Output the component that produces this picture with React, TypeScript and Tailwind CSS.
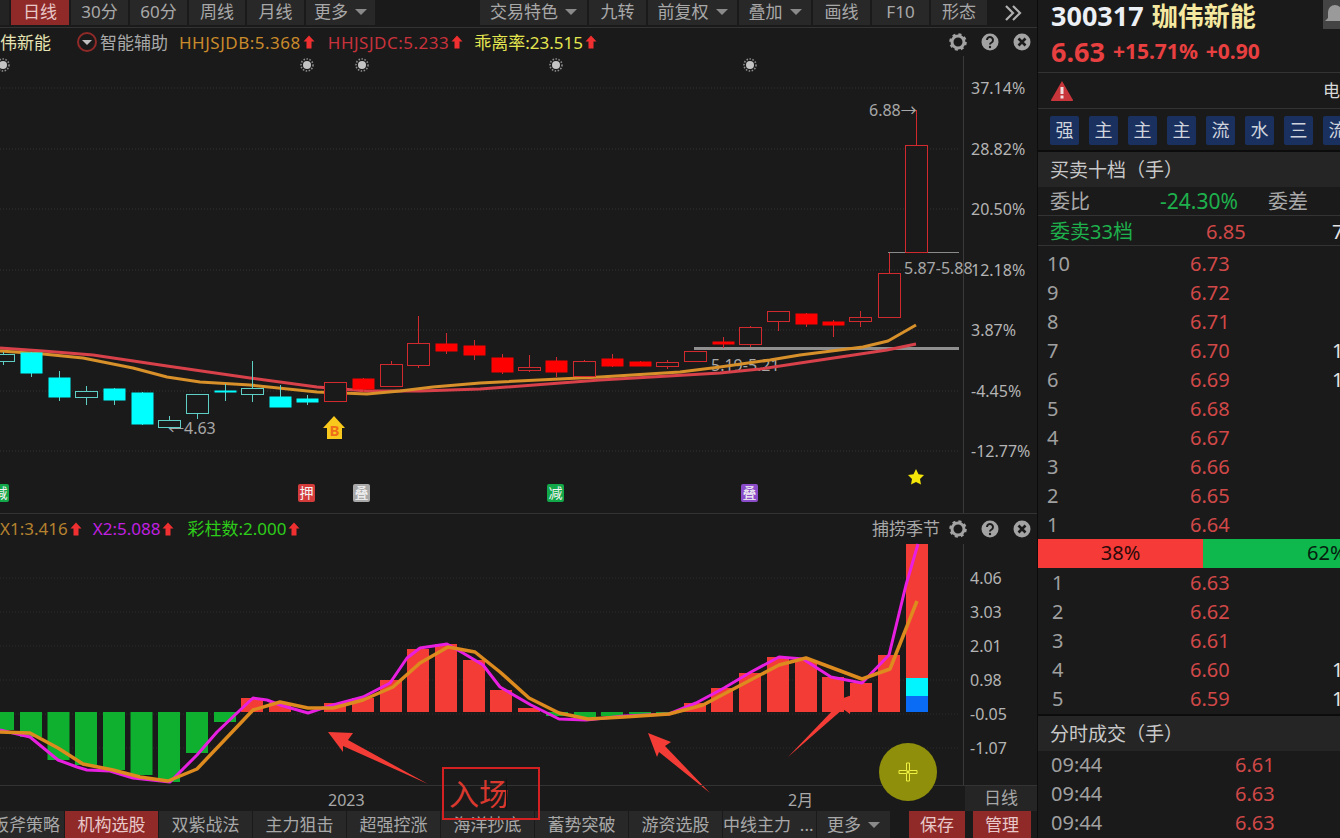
const topLeft = [
  { label: "日线", w: "w-[58px]", active: true },
  { label: "30分", w: "w-[57px]" },
  { label: "60分", w: "w-[57px]" },
  { label: "周线", w: "w-[56px]" },
  { label: "月线", w: "w-[57px]" },
  { label: "更多", w: "w-[69px]", caret: true },
];
const topRight = [
  { label: "交易特色", w: "w-[107px]", caret: true },
  { label: "九转", w: "w-[57px]" },
  { label: "前复权", w: "w-[89px]", caret: true },
  { label: "叠加", w: "w-[72px]", caret: true },
  { label: "画线", w: "w-[57px]" },
  { label: "F10", w: "w-[57px]" },
  { label: "形态", w: "w-[56px]" },
];
const bottomTabs = [
  { label: "机构选股", active: true },
  { label: "双紫战法" },
  { label: "主力狙击" },
  { label: "超强控涨" },
  { label: "海洋抄底" },
  { label: "蓄势突破" },
  { label: "游资选股" },
];

// [x, top, bottom, wickTop, wickBottom, filled]
const candles: [number, number, number, number, number, boolean][] = [
  [3, 354, 361, 352, 365, false],
  [31, 352, 373, 352, 377, true],
  [58.5, 377, 397, 371, 401, true],
  [86, 391, 397, 386, 405, false],
  [114, 388, 400, 388, 405, true],
  [141.5, 392, 424, 392, 425, true],
  [169, 420, 427, 416, 428, false],
  [197, 394, 413, 394, 419, false],
  [224.5, 390, 392, 384, 401, true],
  [252, 388, 394, 361, 402, false],
  [280, 396, 407, 385, 407, true],
  [307, 398, 402, 395, 405, true],
  [335, 382, 401, 382, 401, false],
  [363, 378, 389, 378, 392, true],
  [391, 364, 386, 361, 386, false],
  [418, 343, 365, 316, 368, false],
  [446, 343, 351, 333, 354, true],
  [474, 345, 355, 340, 360, true],
  [501.5, 357, 372, 354, 374, true],
  [529, 367, 370, 355, 372, false],
  [556, 360, 372, 357, 377, true],
  [584, 361, 376, 360, 376, false],
  [612, 358, 366, 354, 367, true],
  [640, 361, 366, 361, 366, true],
  [667, 362, 366, 360, 369, false],
  [695, 351, 361, 351, 361, false],
  [723, 341, 344, 337, 348, true],
  [750, 327, 344, 326, 347, false],
  [778, 311, 321, 311, 331, false],
  [806, 313, 324, 313, 327, true],
  [833, 321, 325, 320, 337, true],
  [860, 317, 321, 311, 327, false],
  [889, 273, 317, 253, 317, false],
  [916, 145, 252, 110, 252, false],
];

const maRed = "0,348 43,351 93,355 167,366 250,378 317,387 367,391 420,391 480,389 600,380 720,373 760,369 800,363 847,356 887,350 916,344";
const maOrange = "0,351 43,354 83,358 133,368 167,377 200,382 250,385 317,392 367,394 400,391 433,387 480,383 600,377 680,372 720,367 770,360 800,355 863,347 888,341 916,325";
const x2Line = "0,730 30,737 58,760 77,767 87,770 110,771 133,778 170,782 197,755 217,732 237,713 253,698 267,700 280,705 308,713 323,708 333,705 363,697 390,683 407,658 420,648 447,644 463,653 483,665 500,687 531,705 559,719 586,720 624,716 669,714 696,703 724,688 751,672 779,657 803,659 831,677 862,683 889,655 906,585 918,544";
const x1Line = "0,732 30,733 58,748 83,764 113,770 140,777 168,781 197,769 253,710 280,702 308,708 333,708 363,700 393,687 420,663 448,647 475,652 500,672 529,698 559,713 588,719 624,717 669,714 703,705 741,685 779,665 806,658 862,679 890,669 917,601";

// [x, y end of bar, positive]
const bars: [number, number, boolean][] = [
  [3, 730, false], [31, 737, false], [58.5, 760, false], [86, 765, false], [114, 770, false],
  [141.5, 775, false], [169, 782, false], [197, 753, false], [225, 722, false], [252, 698, true],
  [280, 703, true], [335, 703, true], [363, 698, true], [391, 680, true], [418, 649, true],
  [446, 644, true], [474, 660, true], [501, 690, true], [529, 708, true], [557, 716, false],
  [585, 718, false], [612, 716, false], [640, 714, false], [667, 713, false], [695, 703, true],
  [722, 688, true], [750, 673, true], [778, 657, true], [806, 660, true], [833, 677, true],
  [861, 683, true], [889, 655, true],
];

const mainGrid = [88, 149, 209, 270, 330, 391, 451];
const mainAxis = ["37.14%", "28.82%", "20.50%", "12.18%", "3.87%", "-4.45%", "-12.77%"];
const subGrid = [578, 612, 646, 680, 714, 748];
const subAxis = ["4.06", "3.03", "2.01", "0.98", "-0.05", "-1.07"];

const asks = [
  ["10", "6.73", ""], ["9", "6.72", ""], ["8", "6.71", ""], ["7", "6.70", "1"], ["6", "6.69", "1"],
  ["5", "6.68", ""], ["4", "6.67", ""], ["3", "6.66", ""], ["2", "6.65", ""], ["1", "6.64", ""],
];
const bids = [
  ["1", "6.63", ""], ["2", "6.62", ""], ["3", "6.61", ""], ["4", "6.60", "1"], ["5", "6.59", "1"],
];
const tags = ["强", "主", "主", "主", "流", "水", "三", "流"];

const Caret = () => (
  <span className="ml-[7px] inline-block h-0 w-0 border-x-[6px] border-t-[6px] border-x-transparent border-t-[#8a8a8a]" />
);

const UpArrow = () => (
  <svg width="12" height="14" viewBox="0 0 12 14" className="mx-[2px] shrink-0">
    <path d="M6 0.5 L11.5 6.5 H8.5 V13.5 H3.5 V6.5 H0.5 Z" fill="#f03030" />
  </svg>
);

const PanelIcons = () => (
  <div className="flex items-center gap-[14px]">
    <svg width="18" height="18" viewBox="0 0 18 18">
      <circle cx="9" cy="9" r="6" fill="none" stroke="#a3a3a3" strokeWidth="3" />
      <circle cx="9" cy="9" r="7.6" fill="none" stroke="#a3a3a3" strokeWidth="2.4" strokeDasharray="3 3" />
    </svg>
    <svg width="18" height="18" viewBox="0 0 18 18">
      <circle cx="9" cy="9" r="8.5" fill="#a3a3a3" />
      <path d="M6 7a3 3 0 1 1 4.6 2.5C9.6 10.100 9 10.500 9 11.500" fill="none" stroke="#1a1a1a" strokeWidth="2" />
      <circle cx="9" cy="14" r="1.2" fill="#1a1a1a" />
    </svg>
    <svg width="18" height="18" viewBox="0 0 18 18">
      <circle cx="9" cy="9" r="8.5" fill="#a3a3a3" />
      <path d="M5.500 5.500 L12.500 12.500 M12.500 5.500 L5.500 12.500" stroke="#1a1a1a" strokeWidth="2.600" />
    </svg>
  </div>
);

const Sun = ({ x }: { x: number }) => (
  <g>
    <circle cx={x} cy={65} r={6} fill="none" stroke="#8c8c8c" strokeWidth="1.600" strokeDasharray="1.500 1.500" />
    <circle cx={x} cy={65} r={4} fill="#c4c4c4" />
  </g>
);

const Tag = ({ x, label, color }: { x: number; label: string; color: string }) => (
  <g>
    <rect x={x - 8} y={484} width={17} height={18} rx={2} fill={color} />
    <text x={x + 0.5} y={498} fontSize="14" fill="#f4f4f4" textAnchor="middle">{label}</text>
  </g>
);

const MainChart = () => (
  <svg width="1037" height="457" viewBox="0 56 1037 457" className="block">
    {mainGrid.map((y, i) => (
      <g key={y}>
        <line x1="0" x2="959" y1={y} y2={y} stroke="#333" strokeDasharray="1 2" />
        <text x="971" y={y + 6} fontSize="16" fill="#b4b4b4">{mainAxis[i]}</text>
      </g>
    ))}
    <line x1="963.500" x2="963.500" y1="56" y2="513" stroke="#3a3a3a" />
    {[3, 307, 362, 556, 750].map((x) => <Sun key={x} x={x} />)}
    <line x1="888" x2="959" y1="252.500" y2="252.500" stroke="#8a8a8a" />
    <line x1="694" x2="959" y1="348.500" y2="348.500" stroke="#8f8f8f" strokeWidth="3" />
    <text x="869" y="116" fontSize="16" fill="#a8a8a8">6.88→</text>
    <text x="904" y="274" fontSize="16" fill="#a8a8a8">5.87-5.88</text>
    <text x="711" y="371" fontSize="16" fill="#a8a8a8">5.19-5.21</text>
    <text x="168" y="434" fontSize="16" fill="#a8a8a8">←4.63</text>
    <polyline points={maRed} fill="none" stroke="#d8414a" strokeWidth="3" strokeLinejoin="round" />
    <polyline points={maOrange} fill="none" stroke="#d8902a" strokeWidth="3" strokeLinejoin="round" />
    {candles.map(([x, top, bottom, wt, wb, filled], i) => {
      const up = i >= 12;
      const solid = up ? "#ff0000" : "#00ffff";
      const edge = up ? "#d02a2e" : "#5fcfc6";
      const cx = Math.round(x) + 0.5;
      return (
        <g key={i}>
          <line x1={cx} x2={cx} y1={wt} y2={wb} stroke={edge} />
          <rect
            x={cx - 11}
            y={top + 0.5}
            width="22"
            height={bottom - top}
            fill={filled ? solid : "#1a1a1a"}
            stroke={filled ? "none" : edge}
          />
        </g>
      );
    })}
    <path d="M334 416 L345 428 H342 V439 H327 V428 H323 Z" fill="#f8c81c" />
    <text x="334.500" y="436" fontSize="15" fontWeight="700" fill="#ef6d1a" textAnchor="middle">B</text>
    <Tag x={0} label="减" color="#12a84a" />
    <Tag x={306} label="押" color="#d43c3c" />
    <Tag x={361} label="叠" color="#a8a8a8" />
    <Tag x={555} label="减" color="#12a84a" />
    <Tag x={749} label="叠" color="#8a4cc8" />
    <path d="M916 469 L918.500 474.200 L924 475 L920 479 L921 484.500 L916 482 L911 484.500 L912 479 L908 475 L913.500 474.200 Z" fill="#f5e60a" />
  </svg>
);

const SubChart = () => (
  <svg width="1037" height="241" viewBox="0 544 1037 241" className="block overflow-visible">
    {subGrid.map((y, i) => (
      <g key={y}>
        <line x1="0" x2="959" y1={y} y2={y} stroke="#2c2c2c" strokeDasharray="1 2" />
        <text x="970" y={y + 6} fontSize="16" fill="#b4b4b4">{subAxis[i]}</text>
      </g>
    ))}
    <line x1="963.500" x2="963.500" y1="544" y2="785" stroke="#3a3a3a" />
    {bars.map(([x, end, positive]) => (
      <rect
        key={x}
        x={x - 11}
        y={positive ? end : 712}
        width="22"
        height={positive ? 712 - end : end - 712}
        fill={positive ? "#f43c36" : "#0fb02f"}
      />
    ))}
    <rect x="906" y="544" width="22" height="134" fill="#f43c36" />
    <rect x="906" y="678" width="22" height="18" fill="#00f5ff" />
    <rect x="906" y="696" width="22" height="16" fill="#0a6cf5" />
    <polyline points={x2Line} fill="none" stroke="#e81fe0" strokeWidth="3" strokeLinejoin="round" />
    <polyline points={x1Line} fill="none" stroke="#dd8a1e" strokeWidth="3.500" strokeLinejoin="round" />
    <polygon points="328,732 353,733 348,740 428,784 343,746 343,752" fill="#f43c36" />
    <polygon points="648,733 671,742 665,746 710,793 659,752 657,757" fill="#f43c36" />
    <polygon points="852,695 850,714 843,709 788,757 834,709 832,702" fill="#f43c36" />
  </svg>
);

const App = () => {
  return (
    <div className="relative flex h-[838px] w-[1340px] overflow-hidden bg-[#1a1a1a] font-['Noto_Sans','Noto_Sans_CJK_SC',sans-serif] text-[#a8a8a8]">
      <div className="flex w-[1037px] shrink-0 flex-col">
        <div className="flex h-[28px] items-start gap-[2px] border-b border-[#333]">
          <div className="h-[25px] w-[9px] bg-[#232323]" />
          {topLeft.map((t) => (
            <div
              key={t.label}
              className={`flex h-[25px] items-center justify-center pb-[2px] text-[17px] ${t.w} ${t.active ? "bg-[#8f2a28] text-[#e8c8c8]" : "bg-[#282828]"}`}
            >
              {t.label}
              {t.caret && <Caret />}
            </div>
          ))}
          <div className="flex-1" />
          {topRight.map((t) => (
            <div key={t.label} className={`flex h-[25px] items-center justify-center bg-[#282828] pb-[2px] text-[17px] ${t.w}`}>
              {t.label}
              {t.caret && <Caret />}
            </div>
          ))}
          <div className="flex h-[25px] w-[48px] items-center justify-center text-[#b0b0b0]">
            <svg width="18" height="16" viewBox="0 0 18 16">
              <path d="M2 1 L9 8 L2 15 M9 1 L16 8 L9 15" fill="none" stroke="currentColor" strokeWidth="2.200" />
            </svg>
          </div>
        </div>

        <div className="flex h-[28px] items-center pr-[6px] text-[17px]">
          <span className="w-[77px] pt-[2px] text-[#e6e4b4]">伟新能</span>
          <span className="flex h-[20px] w-[20px] items-center justify-center rounded-full border-2 border-[#8f2a28]">
            <span className="h-0 w-0 border-x-[5px] border-t-[5px] border-x-transparent border-t-[#c0c0c0]" />
          </span>
          <span className="ml-[3px] w-[79px] pt-[2px]">智能辅助</span>
          <span className="pt-[2px] tracking-[0.5px] text-[#c98a2b]">HHJSJDB:5.368</span>
          <UpArrow />
          <span className="ml-[11px] pt-[2px] tracking-[0.5px] text-[#c8323c]">HHJSJDC:5.233</span>
          <UpArrow />
          <span className="ml-[9px] pt-[2px] text-[#e4e650]">乖离率:23.515</span>
          <UpArrow />
          <div className="ml-auto">
            <PanelIcons />
          </div>
        </div>

        <MainChart />

        <div className="flex h-[31px] items-center border-t border-[#333] pr-[6px] text-[17px]">
          <span className="text-[#b5822f]">X1:3.416</span>
          <UpArrow />
          <span className="ml-[9px] text-[#c020e0]">X2:5.088</span>
          <UpArrow />
          <span className="ml-[11px] text-[#2ecc1a]">彩柱数:2.000</span>
          <UpArrow />
          <div className="ml-auto flex items-center gap-[9px]">
            <span>捕捞季节</span>
            <PanelIcons />
          </div>
        </div>

        <SubChart />

        <div className="flex h-[26px] border-t border-[#333] text-[16px]">
          <div className="relative flex-1">
            <span className="absolute left-[328px] top-[2px]">2023</span>
            <span className="absolute left-[788px] top-[2px]">2月</span>
          </div>
          <div className="flex w-[72px] items-center justify-center bg-[#252525] pb-[2px] text-[17px]">日线</div>
        </div>

        <div className="flex h-[27px] items-end gap-[1px] text-[17px]">
          <div className="flex h-full w-[64px] items-center justify-end overflow-hidden whitespace-nowrap bg-[#282828] pr-[4px]">
            <span className="shrink-0">板斧策略</span>
          </div>
          {bottomTabs.map((t) => (
            <div
              key={t.label}
              className={`flex h-full w-[93px] items-center justify-center ${t.active ? "bg-[#8f2a28] text-[#e8c8c8]" : "bg-[#282828]"}`}
            >
              {t.label}
            </div>
          ))}
          <div className="flex h-full w-[93px] items-center whitespace-pre bg-[#282828]">中线主力  ...</div>
          <div className="flex h-full w-[73px] items-center justify-center bg-[#282828]">
            更多
            <Caret />
          </div>
          <div className="ml-[18px] flex h-full w-[56px] items-center justify-center bg-[#8f2a28] text-[#e8c8c8]">保存</div>
          <div className="ml-[7px] flex h-full w-[58px] items-center justify-center bg-[#8f2a28] text-[#e8c8c8]">管理</div>
        </div>
      </div>

      <div className="flex min-w-0 flex-1 flex-col overflow-hidden border-l border-[#0c0c0c]">
        <div className="relative h-[73px] border-b border-[#333] pl-[13px]">
          <div className="flex h-[32px] items-center gap-[8px] whitespace-nowrap font-bold">
            <span className="text-[27px] text-[#eceff4]">300317</span>
            <span className="text-[26px] text-[#f5e8a0]">珈伟新能</span>
          </div>
          <div className="flex h-[40px] items-center gap-[8px] font-bold text-[#e84040]">
            <span className="text-[27px]">6.63</span>
            <span className="text-[21px]">+15.71%</span>
            <span className="text-[21px]">+0.90</span>
          </div>
          <div className="absolute right-0 top-0 flex h-[29px] w-[17px] items-start overflow-hidden bg-[#444]">
            <svg width="24" height="24" viewBox="0 0 24 24" className="mt-[3px] shrink-0">
              <path d="M12 2a7 7 0 0 1 7 7v6l3 3H2l3-3V9a7 7 0 0 1 7-7z" fill="#9a9a9a" />
            </svg>
          </div>
        </div>

        <div className="flex h-[36px] items-center border-b border-[#333] pl-[12px]">
          <svg width="24" height="22" viewBox="0 0 24 22">
            <path d="M12 1 L23 20 Q23.500 21 22 21 H2 Q0.500 21 1 20 Z" fill="#c8353a" />
            <rect x="10.500" y="7" width="3" height="7" fill="#f0e0e0" />
            <rect x="10.500" y="15.500" width="3" height="3" fill="#f0e0e0" />
          </svg>
          <span className="ml-auto w-[17px] shrink-0 overflow-hidden whitespace-nowrap text-[17px] text-[#d8d8d8]">电力</span>
        </div>

        <div className="flex h-[43px] items-center gap-[10px] border-b-2 border-[#0c0c0c] pl-[12px] pt-[2px]">
          {tags.map((t, i) => (
            <div key={i} className="flex h-[29px] w-[29px] shrink-0 items-center justify-center rounded-[2px] bg-[#1a3160] text-[18px] text-[#d0d4dc]">
              {t}
            </div>
          ))}
        </div>

        <div className="flex h-[35px] items-center bg-[#252525] pl-[12px] pt-[1px] text-[19px] text-[#c8c8c8]">买卖十档（手）</div>

        <div className="flex h-[29px] items-center border-b border-[#333] pl-[12px] pt-[2px] text-[20px]">
          <span className="w-[110px]">委比</span>
          <span className="w-[108px] text-[21px] text-[#1eb04c]">-24.30%</span>
          <span>委差</span>
        </div>
        <div className="flex h-[30px] items-center border-b border-[#333] pl-[12px] pt-[3px] text-[20px]">
          <span className="w-[156px] text-[#1eb04c]">委卖33档</span>
          <span className="text-[#d04848]">6.85</span>
          <span className="ml-auto w-[8px] shrink-0 overflow-hidden text-[#e4e4e4]">7</span>
        </div>

        <div className="flex flex-col pt-[3px]">
          {asks.map(([l, p, v]) => (
            <div key={l} className="flex h-[29px] items-center pt-[1px] text-[20px] leading-none">
              <span className="w-[152px] pl-[9px] text-[#a0a0a0]">{l}</span>
              <span className="text-[#d04848]">{p}</span>
              <span className="ml-auto w-[8px] shrink-0 overflow-hidden text-[#e4e4e4]">{v}</span>
            </div>
          ))}
        </div>

        <div className="flex h-[29px] text-[20px]">
          <div className="flex w-[165px] items-center justify-center bg-[#f63a38] pb-[2px] text-[#2a0a0a]">38%</div>
          <div className="flex flex-1 items-center justify-end whitespace-nowrap bg-[#0fb84c] pb-[2px] text-[#062010]">
            <span className="w-[33px] overflow-hidden">62%</span>
          </div>
        </div>

        <div className="flex flex-col border-b-2 border-[#0c0c0c] pb-[1px]">
          {bids.map(([l, p, v]) => (
            <div key={l} className="flex h-[29px] items-center pt-[1px] text-[20px] leading-none">
              <span className="w-[152px] pl-[14px] text-[#a0a0a0]">{l}</span>
              <span className="text-[#d04848]">{p}</span>
              <span className="ml-auto w-[8px] shrink-0 overflow-hidden text-[#e4e4e4]">{v}</span>
            </div>
          ))}
        </div>

        <div className="flex h-[35px] items-center bg-[#252525] pl-[12px] pt-[1px] text-[19px] text-[#c8c8c8]">分时成交（手）</div>

        <div className="flex flex-col">
          {["6.61", "6.63", "6.63"].map((p, i) => (
            <div key={i} className="flex h-[29px] items-center pb-[2px] text-[20px] leading-none">
              <span className="w-[197px] pl-[13px] text-[#a0a0a0]">09:44</span>
              <span className="text-[#d04848]">{p}</span>
            </div>
          ))}
        </div>
      </div>

      {/* things drawn on top of the window */}
      <div className="absolute left-[442px] top-[767px] flex h-[53px] w-[98px] items-center border-2 border-[#d42020] pl-[5px] text-[30px] text-[#d8382e]">
        入场
        <span className="ml-[-3px] h-[30px] w-[1px] bg-[#111]" />
      </div>
      <div className="absolute left-[879px] top-[743px] flex h-[58px] w-[58px] items-center justify-center rounded-full bg-[#8f8f0c]">
        <svg width="20" height="20" viewBox="0 0 20 20">
          <path d="M8.500 1h3v7.500H19v3h-7.500V19h-3v-7.500H1v-3h7.500z" fill="none" stroke="#f0f040" strokeWidth="1" />
          <rect x="8.500" y="8.500" width="3" height="3" fill="#f0f040" />
        </svg>
      </div>
    </div>
  );
};

export default App;
